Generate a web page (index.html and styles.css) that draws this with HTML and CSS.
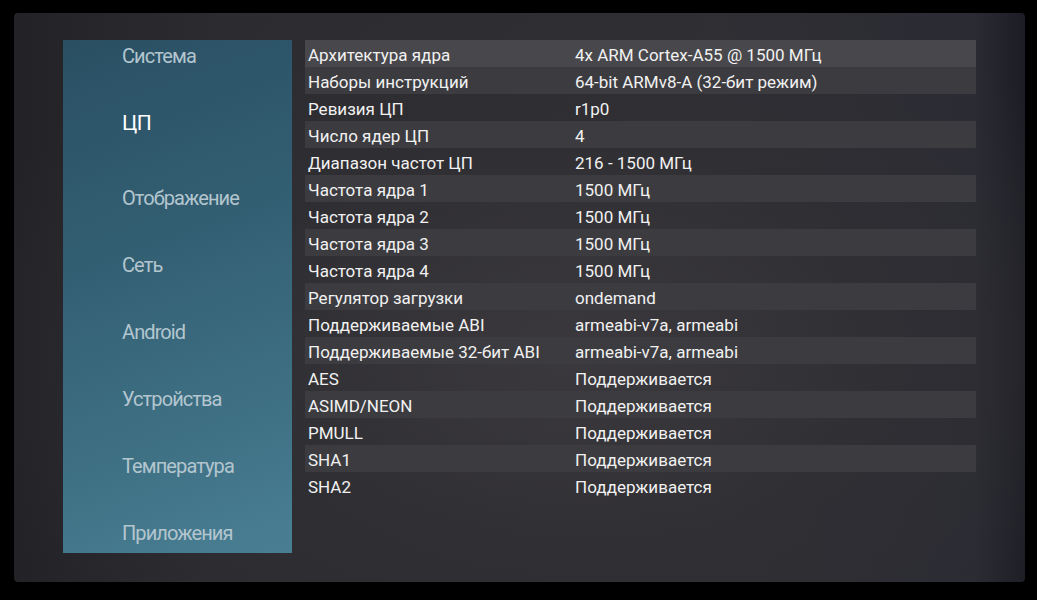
FILE: index.html
```html
<!DOCTYPE html>
<html lang="ru">
<head>
<meta charset="utf-8">
<title>CPU</title>
<link rel="stylesheet" href="styles.css">
</head>
<body>
<div class="frame">
  <div class="screen">
    <nav class="sidebar">
      <ul class="menu">
        <li class="item">Система</li>
        <li class="item selected">ЦП</li>
        <li class="item">Отображение</li>
        <li class="item">Сеть</li>
        <li class="item">Android</li>
        <li class="item">Устройства</li>
        <li class="item">Температура</li>
        <li class="item">Приложения</li>
      </ul>
    </nav>
    <div class="table">
      <div class="row first"><span class="key">Архитектура ядра</span><span class="val">4x ARM Cortex-A55 @ 1500 МГц</span></div>
      <div class="row"><span class="key">Наборы инструкций</span><span class="val">64-bit ARMv8-A (32-бит режим)</span></div>
      <div class="row"><span class="key">Ревизия ЦП</span><span class="val">r1p0</span></div>
      <div class="row"><span class="key">Число ядер ЦП</span><span class="val">4</span></div>
      <div class="row"><span class="key">Диапазон частот ЦП</span><span class="val">216 - 1500 МГц</span></div>
      <div class="row"><span class="key">Частота ядра 1</span><span class="val">1500 МГц</span></div>
      <div class="row"><span class="key">Частота ядра 2</span><span class="val">1500 МГц</span></div>
      <div class="row"><span class="key">Частота ядра 3</span><span class="val">1500 МГц</span></div>
      <div class="row"><span class="key">Частота ядра 4</span><span class="val">1500 МГц</span></div>
      <div class="row"><span class="key">Регулятор загрузки</span><span class="val">ondemand</span></div>
      <div class="row"><span class="key">Поддерживаемые ABI</span><span class="val">armeabi-v7a, armeabi</span></div>
      <div class="row"><span class="key">Поддерживаемые 32-бит ABI</span><span class="val">armeabi-v7a, armeabi</span></div>
      <div class="row"><span class="key">AES</span><span class="val">Поддерживается</span></div>
      <div class="row"><span class="key">ASIMD/NEON</span><span class="val">Поддерживается</span></div>
      <div class="row"><span class="key">PMULL</span><span class="val">Поддерживается</span></div>
      <div class="row"><span class="key">SHA1</span><span class="val">Поддерживается</span></div>
      <div class="row"><span class="key">SHA2</span><span class="val">Поддерживается</span></div>
    </div>
  </div>
</div>
</body>
</html>
```
FILE: styles.css
```css
html, body {
  margin: 0;
  padding: 0;
  background: #000;
  width: 1037px;
  height: 600px;
  overflow: hidden;
  font-family: Roboto, "Noto Sans", "Liberation Sans", sans-serif;
}
.frame {
  width: 1037px;
  height: 600px;
  padding: 13px 12px 18px 14px;
  box-sizing: border-box;
  background: #000;
}
.screen {
  width: 100%;
  height: 100%;
  border-radius: 4px;
  background:
    radial-gradient(ellipse at 55% 60%, rgba(60,58,62,0.9) 0%, rgba(48,47,51,0.6) 45%, rgba(30,30,36,0) 80%),
    linear-gradient(90deg, #222227 0%, #2c2b30 20%, #2f2e33 70%, #2a2b33 95%, #1c1d24 100%);
  box-sizing: border-box;
  padding: 27px 0 0 49px;
  display: flex;
  align-items: flex-start;
  gap: 13px;
}
.sidebar {
  width: 229px;
  height: 513px;
  flex: none;
  overflow: hidden;
  background: linear-gradient(160deg, #2a4f63 0%, #335f73 40%, #3f7185 75%, #4a7f93 100%);
}
.menu {
  list-style: none;
  margin: -18px 0 0 0;
  padding: 0;
}
.item {
  height: 67px;
  display: flex;
  align-items: center;
  padding-left: 59px;
  font-size: 20px;
  letter-spacing: -0.9px;
  color: #b3c6cf;
}
.item.selected {
  color: #ffffff;
  font-size: 21px;
  letter-spacing: -0.6px;
  margin-bottom: 8px;
}
.table {
  width: 671px;
  display: flex;
  flex-direction: column;
}
.row {
  height: 27px;
  display: grid;
  grid-template-columns: 267px 1fr;
  align-items: center;
  padding: 2px 0 0 3px;
  box-sizing: border-box;
  font-size: 17px;
  color: #f1f1f1;
}
.row:nth-child(even) {
  background: #3c3c40;
}
.row.first {
  background: #48484c;
}
```
